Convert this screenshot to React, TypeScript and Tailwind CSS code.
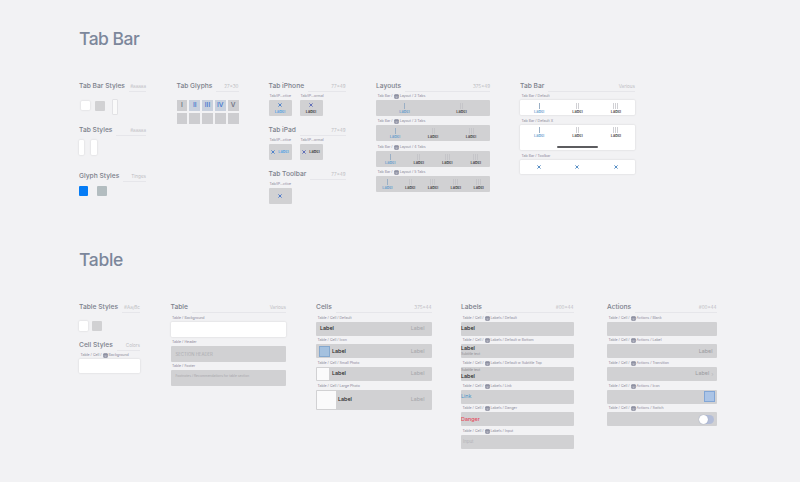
import React from "react";
import { clsx } from "clsx";

type Kids = { children?: React.ReactNode; className?: string };

function Header({ title, count, className }: { title: string; count: string; className?: string }) {
  return (
    <div className={clsx("flex h-[11px] w-full shrink-0 items-center whitespace-nowrap", className)}>
      <span className="text-[6.7px] leading-[11px] font-medium text-[#7b808b]">{title}</span>
      <span className="ml-1 flex h-full flex-1 items-center justify-end border-b border-[#e6e6ea] text-[4.6px] leading-[11px] text-[#bdbdc3]">
        {count}
      </span>
    </div>
  );
}

function Symbol() {
  return (
    <svg viewBox="0 0 10 10" className="mx-[1px] size-[5px] shrink-0">
      <rect x="0.5" y="0.5" width="9" height="9" rx="2" fill="#85889a" />
      <path d="M2.5 4.5h5M3 7h4" stroke="#e4e4ec" strokeWidth="1" />
    </svg>
  );
}

function Caption({ pre, post, className }: { pre: string; post?: string; className?: string }) {
  return (
    <div className={clsx("flex h-[7px] shrink-0 items-center whitespace-nowrap pl-[1.5px] text-[3.55px] leading-[7px] text-[#8b8899]", className)}>
      <span>{pre}</span>
      {post && <Symbol />}
      {post && <span>{post}</span>}
    </div>
  );
}

function Box({ children, className }: Kids) {
  return <div className={clsx("flex shrink-0 rounded-[1px]", className)}>{children}</div>;
}

function Swatch({ className }: { className: string }) {
  return <div className={clsx("shrink-0 rounded-[1px]", className)} />;
}

function Cross({ className }: { className?: string }) {
  return (
    <svg viewBox="0 0 10 10" className={clsx("size-[4px] shrink-0", className)}>
      <path d="M1 1l8 8M9 1l-8 8" stroke="currentColor" strokeWidth="2.2" fill="none" />
    </svg>
  );
}

function Numeral({ count, active, dim }: { count: number; active?: boolean; dim?: boolean }) {
  const bars = Array.from({ length: count }, (_, i) => i);
  return (
    <div className="flex h-[6px] justify-center gap-[1px]">
      {bars.map((i) => (
        <span key={i} className={clsx("w-[1px]", active ? "bg-[#9aafc5]" : dim ? "bg-[#c5c5c9]" : "bg-[#d0d0d4]")} />
      ))}
    </div>
  );
}

function Tabs({ count, dim }: { count: number; dim?: boolean }) {
  const tabs = Array.from({ length: count }, (_, i) => i);
  return (
    <div className="flex w-full">
      {tabs.map((i) => (
        <div key={i} className="flex flex-1 flex-col items-center">
          <Numeral count={Math.min(i + 1, 3)} active={i === 0} dim={dim} />
          <span className={clsx("mt-[1px] text-[4px] leading-[4px] font-medium", i === 0 ? "text-[#5796cc]" : "text-[#2e2e31]")}>
            Label
          </span>
        </div>
      ))}
    </div>
  );
}

const gray = "bg-[#d1d1d3]";
const white = "bg-white shadow-[0_0_2px_rgba(0,0,0,0.16)]";

function TabTile({ blue, wide }: { blue?: boolean; wide?: boolean }) {
  return (
    <div className="flex w-[23px] flex-col">
      <Caption pre={blue ? "Tab/iP...ctive" : "Tab/iP...ormal"} className="pl-[1px]" />
      <Box className={clsx("h-[16px] items-center justify-center", gray, wide ? "gap-[3px]" : "flex-col gap-[3px] pt-[1px]")}>
        <Cross className={blue ? "text-[#3f79c9]" : "text-[#5263b5]"} />
        <span className={clsx("text-[4px] leading-[4px] font-medium", blue ? "text-[#3f9be6]" : "text-[#252528]")}>Label</span>
      </Box>
    </div>
  );
}

function TabBarSection() {
  return (
    <div className="flex">
      <div className="flex w-[67px] flex-col">
        <Header title="Tab Bar Styles" count="#aaaaa" />
        <div className="mt-[7px] flex h-[18px] items-start pl-[2px]">
          <Swatch className={clsx("mt-[2px] h-[9px] w-[9px]", white)} />
          <Swatch className={clsx("mt-[2px] ml-[5px] h-[10px] w-[10px]", gray)} />
          <Swatch className="ml-[7px] h-[16px] w-[6px] border border-[#e2e2e5] bg-[#fafafa]" />
        </div>
        <Header title="Tab Styles" count="#aaaaa" className="mt-[8px]" />
        <div className="mt-[4px] flex gap-[7px]">
          <Swatch className={clsx("h-[15px] w-[5px]", white)} />
          <Swatch className={clsx("h-[15px] w-[6px]", white)} />
        </div>
        <Header title="Glyph Styles" count="Tinges" className="mt-[16px]" />
        <div className="mt-[4px] flex gap-[9px]">
          <Swatch className="h-[10px] w-[9px] bg-[#057cf5]" />
          <Swatch className="h-[10px] w-[10px] bg-[#b3bdc0]" />
        </div>
      </div>
      <div className="ml-[30.5px] flex w-[62px] flex-col">
        <Header title="Tab Glyphs" count="27×30" />
        <div className="mt-[8px] grid w-[62px] grid-cols-5 gap-x-[2px] gap-y-[2px]">
          {["I", "II", "III", "IV", "V"].map((n, i) => (
            <div
              key={n}
              className={clsx(
                "flex h-[11px] items-center justify-center text-[6.6px] leading-[11px] font-medium",
                i === 0 || i === 4 ? "bg-[#cdcdd0] text-[#666c7d]" : "bg-[#c8d0dd] text-[#3d74cf]"
              )}
            >
              {n}
            </div>
          ))}
          {[0, 1, 2, 3, 4].map((n) => (
            <div key={n} className="h-[11px] bg-[#cdcdd0]" />
          ))}
        </div>
      </div>
      <div className="ml-[30px] flex w-[77px] flex-col">
        <Header title="Tab iPhone" count="77×49" />
        <div className="mt-[1px] flex gap-[8px]">
          <TabTile blue />
          <TabTile />
        </div>
        <Header title="Tab iPad" count="77×49" className="mt-[9px]" />
        <div className="mt-[1px] flex gap-[8px]">
          <TabTile blue wide />
          <TabTile wide />
        </div>
        <Header title="Tab Toolbar" count="77×49" className="mt-[9px]" />
        <div className="mt-[1px] flex w-[23px] flex-col">
          <Caption pre="Tab/iP...ctive" className="pl-[1px]" />
          <Box className={clsx("h-[16px] items-center justify-center", gray)}>
            <Cross className="text-[#3f6fc9]" />
          </Box>
        </div>
      </div>
      <div className="ml-[30.5px] flex w-[114px] flex-col">
        <Header title="Layouts" count="375×49" />
        <Caption pre="Tab Bar /" post="Layout / 2 Tabs" className="mt-[1px]" />
        <Box className={clsx("h-[16px] pt-[3px]", gray)}><Tabs count={2} dim /></Box>
        <Caption pre="Tab Bar /" post="Layout / 3 Tabs" className="mt-[2px]" />
        <Box className={clsx("h-[16px] pt-[3px]", gray)}><Tabs count={3} dim /></Box>
        <Caption pre="Tab Bar /" post="Layout / 4 Tabs" className="mt-[3px]" />
        <Box className={clsx("h-[16px] pt-[3px]", gray)}><Tabs count={4} dim /></Box>
        <Caption pre="Tab Bar /" post="Layout / 5 Tabs" className="mt-[2px]" />
        <Box className={clsx("h-[16px] pt-[3px]", gray)}><Tabs count={5} dim /></Box>
      </div>
      <div className="ml-[30px] flex w-[115px] flex-col">
        <Header title="Tab Bar" count="Various" />
        <Caption pre="Tab Bar / Default" className="mt-[1px]" />
        <Box className={clsx("h-[15px] pt-[3px]", white)}><Tabs count={3} /></Box>
        <Caption pre="Tab Bar / Default X" className="mt-[3px]" />
        <Box className={clsx("h-[25px] flex-col items-center pt-[2px]", white)}>
          <Tabs count={3} />
          <div className="mt-[8px] h-[1.5px] w-[41px] rounded-full bg-[#5c5c5f]" />
        </Box>
        <Caption pre="Tab Bar / Toolbar" className="mt-[3px]" />
        <Box className={clsx("h-[14px] items-center justify-around text-[#4381bd]", white)}>
          <div className="flex flex-1 justify-center"><Cross /></div>
          <div className="flex flex-1 justify-center"><Cross /></div>
          <div className="flex flex-1 justify-center"><Cross /></div>
        </Box>
      </div>
    </div>
  );
}

function Label({ children, className }: Kids) {
  return <span className={clsx("leading-[7px]", className)}>{children}</span>;
}

function Row({ pre, post, children, className }: { pre: string; post?: string } & Kids) {
  return (
    <div className="mb-[1.7px] flex flex-col">
      <Caption pre={pre} post={post} />
      <Box className={clsx("h-[14px] text-[5.4px]", gray, className)}>{children}</Box>
    </div>
  );
}

function TableSection() {
  return (
    <div className="flex">
      <div className="flex w-[61px] flex-col">
        <Header title="Table Styles" count="#Aa/Bc" />
        <div className="mt-[8px] flex gap-[4px]">
          <Swatch className={clsx("h-[10px] w-[9px]", white)} />
          <Swatch className={clsx("h-[10px] w-[10px]", gray)} />
        </div>
        <Header title="Cell Styles" count="Colors" className="mt-[9px]" />
        <Caption pre="Table / Cell /" post="Background" className="mt-[1px]" />
        <Box className={clsx("h-[14px]", white)} />
      </div>
      <div className="ml-[30.5px] flex w-[115.5px] flex-col">
        <Header title="Table" count="Various" />
        <Caption pre="Table / Background" className="mt-[1.5px]" />
        <Box className={clsx("h-[15px]", white)} />
        <Caption pre="Table / Header" className="mt-[2px]" />
        <Box className={clsx("h-[16px] items-center pt-[3px] pl-[5px] text-[4.3px] text-[#acacb0]", gray)}>SECTION HEADER</Box>
        <Caption pre="Table / Footer" className="mt-[1px]" />
        <Box className={clsx("h-[16px] pt-[4px] pl-[5px] text-[3.3px] leading-[5px] text-[#a8a8ac]", gray)}>
          Footnotes / Recommendations for table section
        </Box>
      </div>
      <div className="ml-[30px] flex w-[115.5px] flex-col">
        <Header title="Cells" count="375×44" className="mb-[1.5px]" />
        <Row pre="Table / Cell / Default" className="items-center justify-between px-[4px]">
          <Label className="font-medium text-[#1d1d1f]">Label</Label>
          <Label className="mr-[3px] text-[#a6a6aa]">Label</Label>
        </Row>
        <Row pre="Table / Cell / Icon" className="items-center pr-[7px] pl-[3px]">
          <div className="h-[11px] w-[10.5px] border border-[#85a9cf] bg-[#a4c1df]" />
          <Label className="ml-[2.5px] flex-1 font-medium text-[#1d1d1f]">Label</Label>
          <Label className="text-[#a6a6aa]">Label</Label>
        </Row>
        <Row pre="Table / Cell / Small Photo" className="items-center pr-[7px] pl-[1px]">
          <div className="h-[12px] w-[12px] bg-[#fafafb]" />
          <Label className="ml-[3px] flex-1 font-medium text-[#1d1d1f]">Label</Label>
          <Label className="text-[#a6a6aa]">Label</Label>
        </Row>
        <Caption pre="Table / Cell / Large Photo" />
        <Box className={clsx("h-[20.5px] items-center pr-[7px] pl-[1px] text-[5.4px]", gray)}>
          <div className="h-[18.5px] w-[18.5px] bg-[#fafafb]" />
          <Label className="ml-[2.5px] flex-1 font-medium text-[#1d1d1f]">Label</Label>
          <Label className="text-[#a6a6aa]">Label</Label>
        </Box>
      </div>
      <div className="ml-[29.5px] flex w-[112.5px] flex-col">
        <Header title="Labels" count="#00x44" className="mb-[1.5px]" />
        <Row pre="Table / Cell /" post="Labels / Default" className="items-center">
          <Label className="font-medium text-[#1d1d1f]">Label</Label>
        </Row>
        <Row pre="Table / Cell /" post="Labels / Default w Bottom" className="flex-col justify-center">
          <Label className="font-medium text-[#1d1d1f]">Label</Label>
          <span className="text-[3.4px] leading-[5px] text-[#8f8f94]">Subtitle text</span>
        </Row>
        <Row pre="Table / Cell /" post="Labels / Default w Subtitle Top" className="flex-col justify-center">
          <span className="text-[3.4px] leading-[5px] text-[#87878c]">Subtitle text</span>
          <Label className="font-medium text-[#1d1d1f]">Label</Label>
        </Row>
        <Row pre="Table / Cell /" post="Labels / Link" className="items-center">
          <Label className="text-[#4b95c9]">Link</Label>
        </Row>
        <Row pre="Table / Cell /" post="Labels / Danger" className="items-center">
          <Label className="font-medium text-[#e44a5c]">Danger</Label>
        </Row>
        <Row pre="Table / Cell /" post="Labels / Input" className="items-center pl-[2px]">
          <Label className="text-[4.4px] text-[#b4b4b8]">Input</Label>
        </Row>
      </div>
      <div className="ml-[33.5px] flex w-[109.5px] flex-col">
        <Header title="Actions" count="#00x44" className="mb-[1.5px]" />
        <Row pre="Table / Cell /" post="Actions / Blank" />
        <Row pre="Table / Cell /" post="Actions / Label" className="items-center justify-end pr-[4px]">
          <Label className="text-[#9a9a9e]">Label</Label>
        </Row>
        <Row pre="Table / Cell /" post="Actions / Transition" className="items-center justify-end pr-[3px]">
          <Label className="text-[#9a9a9e]">Label</Label>
          <span className="ml-[2px] text-[6px] leading-[7px] text-[#b8b8bc]">›</span>
        </Row>
        <Row pre="Table / Cell /" post="Actions / Icon" className="items-center justify-end pr-[1.5px]">
          <div className="h-[11px] w-[11px] border border-[#82a6d6] bg-[#abc4e6]" />
        </Row>
        <Row pre="Table / Cell /" post="Actions / Switch" className="items-center justify-end pr-[3px]">
          <div className="flex h-[9px] w-[15px] items-center rounded-full bg-[#b3bdd8]">
            <div className="h-[9px] w-[9px] rounded-full bg-white shadow-[0_0_1px_#7d8aa8]" />
          </div>
        </Row>
      </div>
    </div>
  );
}

export default function App() {
  return (
    <div className="h-[482px] w-[800px] overflow-hidden bg-[#f2f2f4] pl-[79px] font-['Inter','Liberation_Sans',sans-serif]">
      <section className="h-[220px] pt-[27px]">
        <h1 className="mb-[30px] h-[24px] text-[17.5px] leading-[24px] font-medium tracking-[-0.5px] text-[#7c879b]">Tab Bar</h1>
        <TabBarSection />
      </section>
      <section className="pt-[28px]">
        <h1 className="mb-[30px] h-[24px] text-[17.5px] leading-[24px] font-medium tracking-[-0.3px] text-[#7c879b]">Table</h1>
        <TableSection />
      </section>
    </div>
  );
}
